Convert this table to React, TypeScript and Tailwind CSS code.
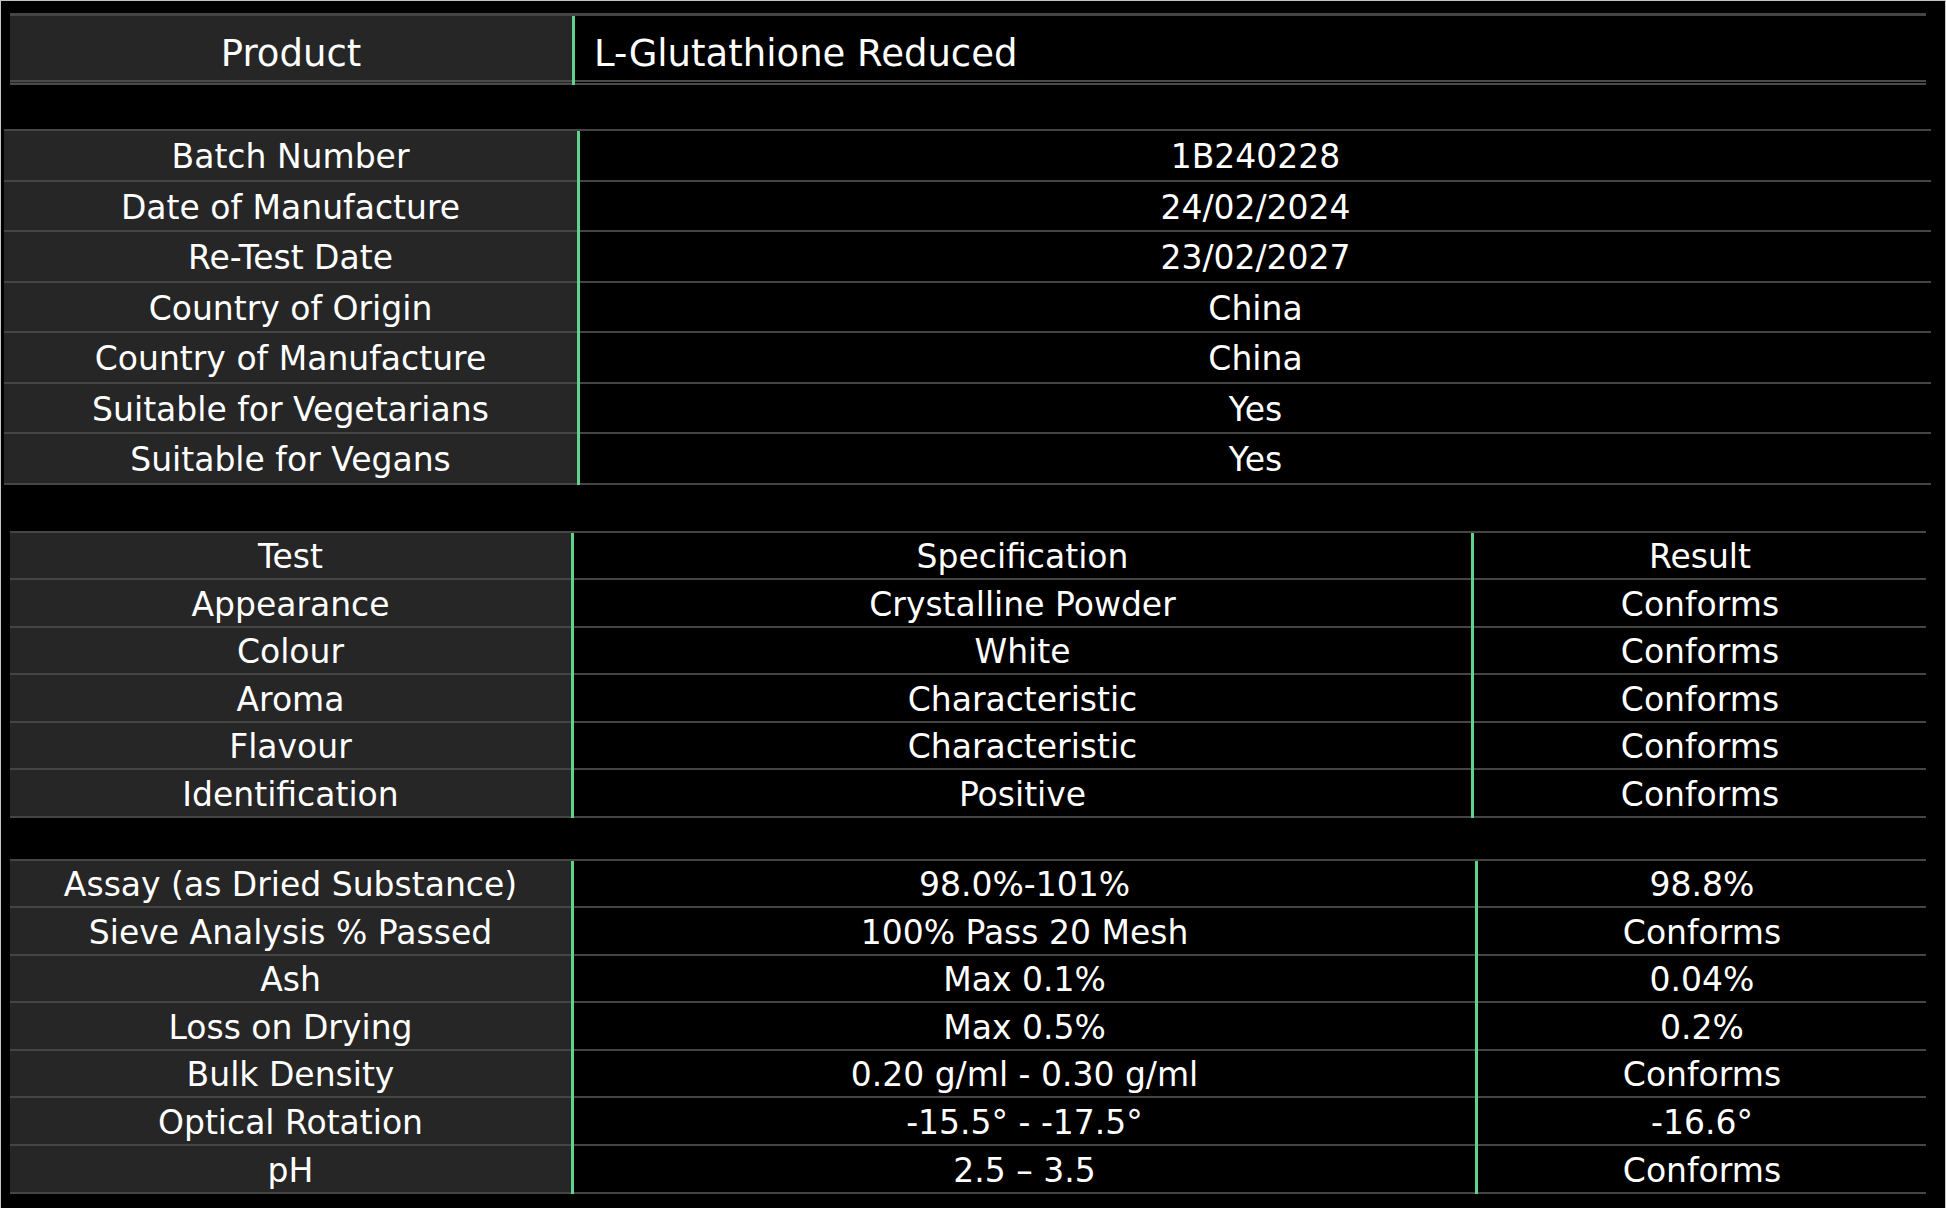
const info: [string, string][] = [
  ['Batch Number', '1B240228'],
  ['Date of Manufacture', '24/02/2024'],
  ['Re-Test Date', '23/02/2027'],
  ['Country of Origin', 'China'],
  ['Country of Manufacture', 'China'],
  ['Suitable for Vegetarians', 'Yes'],
  ['Suitable for Vegans', 'Yes'],
];

const tests: [string, string, string][] = [
  ['Test', 'Specification', 'Result'],
  ['Appearance', 'Crystalline Powder', 'Conforms'],
  ['Colour', 'White', 'Conforms'],
  ['Aroma', 'Characteristic', 'Conforms'],
  ['Flavour', 'Characteristic', 'Conforms'],
  ['Identification', 'Positive', 'Conforms'],
];

const specs: [string, string, string][] = [
  ['Assay (as Dried Substance)', '98.0%-101%', '98.8%'],
  ['Sieve Analysis % Passed', '100% Pass 20 Mesh', 'Conforms'],
  ['Ash', 'Max 0.1%', '0.04%'],
  ['Loss on Drying', 'Max 0.5%', '0.2%'],
  ['Bulk Density', '0.20 g/ml - 0.30 g/ml', 'Conforms'],
  ['Optical Rotation', '-15.5° - -17.5°', '-16.6°'],
  ['pH', '2.5 – 3.5', 'Conforms'],
];

function Green() {
  return <div className="w-[3px] shrink-0 bg-[#5fd38b]" />;
}

const cell = 'flex items-center justify-center pt-[3px] border-b-2 border-[#454545] whitespace-nowrap';

function ThreeColTable({ rows, mt, rowH, specW }: { rows: [string, string, string][]; mt: string; rowH: string; specW: string }) {
  return (
    <div className={`${mt} ml-[9px] w-[1916px] border-t-2 border-[#454545]`}>
      {rows.map(([a, b, c]) => (
        <div key={a} className={`flex ${rowH}`}>
          <div className={`${cell} w-[561px] shrink-0 bg-[#262626]`}>{a}</div>
          <Green />
          <div className={`${cell} ${specW} shrink-0`}>{b}</div>
          <Green />
          <div className={`${cell} flex-1`}>{c}</div>
        </div>
      ))}
    </div>
  );
}

export default function App() {
  return (
    <div className="w-[1946px] h-[1208px] overflow-hidden bg-black border-t border-l border-r border-[#c4c4c4] text-white font-['DejaVu_Sans',sans-serif] text-[33px]">
      {/* product */}
      <div className="mt-[12px] ml-[9px] w-[1916px] border-t-[3px] border-[#454545]">
        <div className="flex h-[69px] text-[37px]">
          <div className="w-[562px] shrink-0 bg-[#262626] border-b-[5px] border-double border-[#4a4a4a] flex items-center justify-center pt-[12px]">
            Product
          </div>
          <Green />
          <div className="flex-1 border-b-[5px] border-double border-[#4a4a4a] flex items-center pl-[19px] pt-[12px]">
            L-Glutathione Reduced
          </div>
        </div>
      </div>

      {/* batch info */}
      <div className="mt-[44px] ml-[3px] w-[1927px] border-t-2 border-[#454545]">
        {info.map(([k, v]) => (
          <div key={k} className="flex h-[50.5px]">
            <div className={`${cell} w-[573px] shrink-0 bg-[#262626]`}>{k}</div>
            <Green />
            <div className={`${cell} flex-1`}>{v}</div>
          </div>
        ))}
      </div>

      <ThreeColTable rows={tests} mt="mt-[46px]" rowH="h-[47.5px]" specW="w-[897px]" />
      <ThreeColTable rows={specs} mt="mt-[41px]" rowH="h-[47.6px]" specW="w-[901px]" />
    </div>
  );
}
